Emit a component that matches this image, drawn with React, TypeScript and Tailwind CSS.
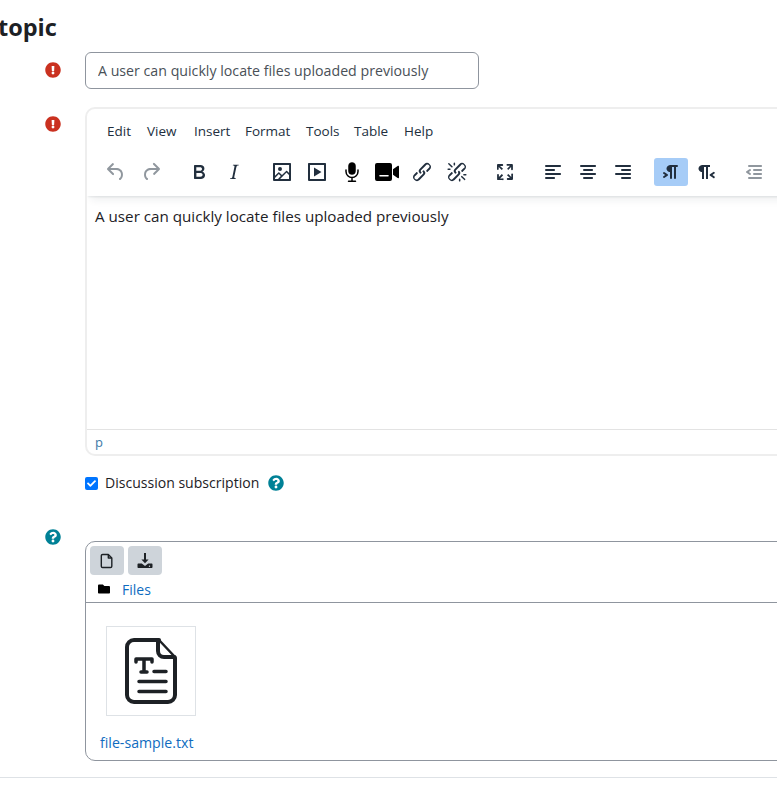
import type { ReactNode } from "react";
import { FaCheck, FaExclamationCircle, FaFolder, FaQuestionCircle } from "react-icons/fa";

// TinyMCE style toolbar glyphs, 24x24 box
const PATHS = {
  undo: "M6.4 8H12c3.7 0 6.2 2 6.8 5.1.6 2.7-.4 5.6-2.3 6.8a1 1 0 0 1-1-1.8c1.1-.6 1.8-2.7 1.4-4.6-.5-2.1-2.1-3.5-4.9-3.5H6.4l3.3 3.3a1 1 0 1 1-1.4 1.4l-5-5a1 1 0 0 1 0-1.4l5-5a1 1 0 0 1 1.4 1.4L6.4 8Z",
  redo: "M17.6 10H12c-2.8 0-4.4 1.4-4.9 3.5-.4 2 .3 4 1.4 4.6a1 1 0 1 1-1 1.8c-2-1.2-2.9-4.1-2.3-6.8.6-3 3-5.1 6.8-5.1h5.6l-3.3-3.3a1 1 0 1 1 1.4-1.4l5 5a1 1 0 0 1 0 1.4l-5 5a1 1 0 0 1-1.4-1.4l3.3-3.3Z",
  bold: "M7.8 19c-.3 0-.5 0-.6-.2l-.2-.5V5.7c0-.2 0-.4.2-.5l.6-.2h5c1.5 0 2.7.3 3.5 1 .7.6 1.1 1.4 1.1 2.5a3 3 0 0 1-.6 1.9c-.4.6-1 1-1.6 1.2.4.1.9.3 1.3.6s.8.7 1 1.2c.4.4.5 1 .5 1.6 0 1.3-.4 2.3-1.3 3-.8.7-2.1 1-3.8 1H7.8Zm5-8.3c.6 0 1.2-.1 1.6-.5.4-.3.6-.7.6-1.3 0-1.1-.8-1.7-2.3-1.7H9.3v3.5h3.4Zm.5 6c.7 0 1.3-.1 1.7-.4.4-.4.6-.9.6-1.5s-.2-1-.7-1.4c-.4-.3-1-.4-2-.4H9.4v3.8h4Z",
  italic: "M16.7 4.7l-.1.9h-.3c-.6 0-1 0-1.4.3-.3.3-.4.6-.5 1.1l-2.1 9.8v.6c0 .5.4.8 1.4.8h.2l-.2.8H8l.2-.8h.2c1.1 0 1.8-.5 2-1.5l2-9.8.1-.5c0-.6-.4-.8-1.4-.8h-.3l.2-.9h5.8Z",
  image: "M5 15.7l3.3-3.2c.3-.3.7-.3 1 0L12 15l4.1-4c.3-.4.8-.4 1 0l2 1.9V5H5v10.7ZM5 18V19h3l2.8-2.9-2-2L5 17.9Zm14-3-2.5-2.4-6.4 6.5H19v-4ZM4 3h16c.6 0 1 .4 1 1v16c0 .6-.4 1-1 1H4a1 1 0 0 1-1-1V4c0-.6.4-1 1-1Zm6 8a2 2 0 1 0 0-4 2 2 0 0 0 0 4Z",
  video: "M4 3h16c.6 0 1 .4 1 1v16c0 .6-.4 1-1 1H4a1 1 0 0 1-1-1V4c0-.6.4-1 1-1Zm1 2v14h14V5H5Zm4 2.5 7.5 4.5L9 16.5v-9Z",
  link: "M6.2 12.3a1 1 0 0 1 1.4 1.4l-2 2a2 2 0 1 0 2.6 2.8l4.8-4.8a1 1 0 0 0 0-1.4 1 1 0 1 1 1.4-1.3 2.9 2.9 0 0 1 0 4L9.6 20a3.9 3.9 0 0 1-5.5-5.5l2-2Zm11.6-.6a1 1 0 0 1-1.4-1.4l2-2a2 2 0 1 0-2.6-2.8L11 10.3a1 1 0 0 0 0 1.4A1 1 0 1 1 9.6 13a2.9 2.9 0 0 1 0-4L14.4 4a3.9 3.9 0 0 1 5.5 5.5l-2 2Z",
  unlink: "M6.2 12.3a1 1 0 0 1 1.4 1.4l-2.1 2a2 2 0 1 0 2.7 2.8l4.8-4.8a1 1 0 0 0 0-1.4 1 1 0 0 1 1.4-1.3 2.9 2.9 0 0 1 0 4L9.6 20a3.9 3.9 0 0 1-5.5-5.5l2-2Zm11.6-.6a1 1 0 0 1-1.4-1.4l2.1-2a2 2 0 1 0-2.7-2.8L11 10.3a1 1 0 0 0 0 1.4A1 1 0 1 1 9.6 13a2.9 2.9 0 0 1 0-4L14.4 4a3.9 3.9 0 0 1 5.5 5.5l-2 2ZM7.6 6.3a.8.8 0 0 1-1 1.1L3.3 4.2a.7.7 0 1 1 1-1l3.2 3.1ZM5.1 8.6a.8.8 0 0 1 0 1.5H3a.8.8 0 0 1 0-1.5H5Zm5-3.5a.8.8 0 0 1-1.5 0V3a.8.8 0 0 1 1.5 0v2Zm6 11.8a.8.8 0 0 1 1-1l3.2 3.2a.8.8 0 0 1-1 1L16 17Zm-2.2 2a.8.8 0 0 1 1.5 0V21a.8.8 0 0 1-1.5 0V19Zm5-3.5a.7.7 0 1 1 0-1.5H21a.8.8 0 0 1 0 1.5H19Z",
  fullscreen: "m15.3 10-1.2-1.3 2.9-3h-2.3a.9.9 0 1 1 0-1.7H19c.5 0 .9.4.9.9v4.4a.9.9 0 1 1-1.8 0V7l-2.9 3Zm0 4 3 3v-2.3a.9.9 0 1 1 1.7 0V19c0 .5-.4.9-.9.9h-4.4a.9.9 0 1 1 0-1.8H17l-3-2.9 1.3-1.2ZM10 15.4l-2.9 3h2.3a.9.9 0 1 1 0 1.7H5a.9.9 0 0 1-.9-.9v-4.4a.9.9 0 1 1 1.8 0V17l2.9-3 1.2 1.3ZM8.7 10 5.7 7v2.3a.9.9 0 0 1-1.7 0V5c0-.5.4-.9.9-.9h4.4a.9.9 0 0 1 0 1.8H7l3 2.9-1.3 1.2Z",
  alignLeft: "M5 5h14c.6 0 1 .4 1 1s-.4 1-1 1H5a1 1 0 1 1 0-2Zm0 4h8c.6 0 1 .4 1 1s-.4 1-1 1H5a1 1 0 1 1 0-2Zm0 8h8c.6 0 1 .4 1 1s-.4 1-1 1H5a1 1 0 0 1 0-2Zm0-4h14c.6 0 1 .4 1 1s-.4 1-1 1H5a1 1 0 0 1 0-2Z",
  alignCenter: "M5 5h14c.6 0 1 .4 1 1s-.4 1-1 1H5a1 1 0 1 1 0-2Zm3 4h8c.6 0 1 .4 1 1s-.4 1-1 1H8a1 1 0 1 1 0-2Zm0 8h8c.6 0 1 .4 1 1s-.4 1-1 1H8a1 1 0 0 1 0-2Zm-3-4h14c.6 0 1 .4 1 1s-.4 1-1 1H5a1 1 0 0 1 0-2Z",
  alignRight: "M5 5h14c.6 0 1 .4 1 1s-.4 1-1 1H5a1 1 0 1 1 0-2Zm6 4h8c.6 0 1 .4 1 1s-.4 1-1 1h-8a1 1 0 0 1 0-2Zm0 8h8c.6 0 1 .4 1 1s-.4 1-1 1h-8a1 1 0 0 1 0-2Zm-6-4h14c.6 0 1 .4 1 1s-.4 1-1 1H5a1 1 0 0 1 0-2Z",
  ltr: "M11 5h7a1 1 0 0 1 0 2h-1v11a1 1 0 0 1-2 0V7h-2v11a1 1 0 0 1-2 0v-6c-.5 0-1 0-1.4-.3A3.4 3.4 0 0 1 7.8 10a3.3 3.3 0 0 1 0-2.8 3.4 3.4 0 0 1 1.8-1.8L11 5ZM4.4 16.2 6.2 15l-1.8-1.2a1 1 0 0 1 1.2-1.6l3 2a1 1 0 0 1 0 1.6l-3 2a1 1 0 1 1-1.2-1.6Z",
  rtl: "M8 5h8v2h-2v12h-2V7h-2v12H8v-7c-.5 0-1 0-1.4-.3A3.4 3.4 0 0 1 4.8 10a3.3 3.3 0 0 1 0-2.8 3.4 3.4 0 0 1 1.8-1.8L8 5Zm12 11.2a1 1 0 1 1-1 1.6l-3-2a1 1 0 0 1 0-1.6l3-2a1 1 0 1 1 1 1.6L18.4 15l1.8 1.2Z",
  outdent: "M7 5h12c.6 0 1 .4 1 1s-.4 1-1 1H7a1 1 0 1 1 0-2Zm5 4h7c.6 0 1 .4 1 1s-.4 1-1 1h-7a1 1 0 0 1 0-2Zm0 4h7c.6 0 1 .4 1 1s-.4 1-1 1h-7a1 1 0 0 1 0-2Zm-5 4h12a1 1 0 0 1 0 2H7a1 1 0 0 1 0-2Zm1.6-3.8a1 1 0 0 1-1.2 1.6l-3-2a1 1 0 0 1 0-1.6l3-2a1 1 0 0 1 1.2 1.6L6.8 12l1.8 1.2Z",
};

const MENU = [
  { label: "Edit", w: "w-[40px]" },
  { label: "View", w: "w-[47px]" },
  { label: "Insert", w: "w-[51px]" },
  { label: "Format", w: "w-[61px]" },
  { label: "Tools", w: "w-[48px]" },
  { label: "Table", w: "w-[50px]" },
  { label: "Help", w: "w-[40px]" },
];

function Btn({ d, dim, active }: { d: string; dim?: boolean; active?: boolean }) {
  return (
    <button type="button" className={`flex h-[28px] w-[35px] shrink-0 items-center justify-center ${dim ? "text-[#222f3e]/50" : "text-[#222f3e]"}`}>
      <span className={`flex h-[28px] w-[34px] items-center justify-center rounded-[3px] ${active ? "bg-[#a6ccf7]" : ""}`}>
        <svg viewBox="0 0 24 24" width="24" height="24" fill="currentColor" fillRule="evenodd">
          <path d={d} />
        </svg>
      </span>
    </button>
  );
}

function IconSlot({ children }: { children: ReactNode }) {
  return <span className="flex h-[28px] w-[35px] shrink-0 items-center justify-center text-black">{children}</span>;
}

export default function App() {
  return (
    <div className="h-[810px] w-[777px] overflow-hidden bg-white font-['Open_Sans',sans-serif] text-[#1d2125]">
      <h3 className="-ml-[2px] h-[52px] pt-[10px] text-[23.5px] font-bold leading-[34px]">topic</h3>

      {/* Subject */}
      <div className="flex">
        <div className="w-[85px] shrink-0 pl-[45px] pt-[10px]">
          <FaExclamationCircle size={16} className="text-[#ca3120]" />
        </div>
        <input
          readOnly
          value="A user can quickly locate files uploaded previously"
          className="h-[37px] w-[394px] rounded-[6px] border border-[#8f959e] px-3 text-[14.2px] text-[#495057] outline-none"
        />
      </div>

      {/* Message editor */}
      <div className="mt-[18px] flex">
        <div className="w-[85px] shrink-0 pl-[45px] pt-[9px]">
          <FaExclamationCircle size={16} className="text-[#ca3120]" />
        </div>
        <div className="h-[349px] w-[740px] shrink-0 overflow-hidden rounded-[10px] border-2 border-[#eeeeee]">
          <div className="relative h-[87px] pl-[11px] shadow-[0_2px_2px_-1px_rgba(34,47,62,0.1),0_8px_8px_-4px_rgba(34,47,62,0.07)]">
            <div className="flex h-[44px] items-center pl-[9px] text-[13.5px] leading-[20px] text-[#222f3e]">
              {MENU.map((m) => (
                <span key={m.label} className={m.w}>{m.label}</span>
              ))}
            </div>
            <div className="flex items-center gap-[13px] pt-[5px]">
              <div className="flex">
                <Btn d={PATHS.undo} dim />
                <Btn d={PATHS.redo} dim />
              </div>
              <div className="flex">
                <Btn d={PATHS.bold} />
                <Btn d={PATHS.italic} />
              </div>
              <div className="flex">
                <Btn d={PATHS.image} />
                <Btn d={PATHS.video} />
                <IconSlot>
                  <svg viewBox="0 0 14 20" width="14" height="20" fill="none" stroke="currentColor">
                    <rect x="3.5" y="0.5" width="7" height="12" rx="3.5" fill="currentColor" strokeWidth="0.5" />
                    <path d="M1 8v1.5a6 6 0 0 0 12 0V8M7 15.5V19M3.5 19.2h7" strokeWidth="1.5" strokeLinecap="round" />
                  </svg>
                </IconSlot>
                <IconSlot>
                  <svg viewBox="0 0 24 18" width="24" height="18" fill="currentColor" fillRule="evenodd">
                    <path d="M2 0h13a2 2 0 0 1 2 2v14a2 2 0 0 1-2 2H2a2 2 0 0 1-2-2V2a2 2 0 0 1 2-2Zm3 12a.7.7 0 0 0 0 1.6h8a.7.7 0 0 0 0-1.6H5Z" />
                    <path d="M18 6.2 22.6 3c.6-.4 1.4 0 1.4.8v10.4c0 .8-.8 1.2-1.4.8L18 11.8V6.2Z" />
                  </svg>
                </IconSlot>
                <Btn d={PATHS.link} />
                <Btn d={PATHS.unlink} />
              </div>
              <Btn d={PATHS.fullscreen} />
              <div className="flex">
                <Btn d={PATHS.alignLeft} />
                <Btn d={PATHS.alignCenter} />
                <Btn d={PATHS.alignRight} />
              </div>
              <div className="flex">
                <Btn d={PATHS.ltr} active />
                <Btn d={PATHS.rtl} />
              </div>
              <Btn d={PATHS.outdent} dim />
            </div>
          </div>
          <div className="h-[233px] pl-[8px] pt-[9px] text-[15.2px] leading-[22px] text-[#1d2125]">
            A user can quickly locate files uploaded previously
          </div>
          <div className="h-[25px] border-t border-[#e3e3e3] pl-[8px] text-[13px] leading-[24px] text-[#3d7aa8]">p</div>
        </div>
      </div>

      {/* Subscription */}
      <div className="mt-[15px] flex h-[24px] items-center pl-[85px] text-[14.05px]">
        <span className="flex h-[13px] w-[13px] items-center justify-center rounded-[2px] bg-[#0075ff] text-white">
          <FaCheck size={9} />
        </span>
        <span className="ml-[7px]">Discussion subscription</span>
        <FaQuestionCircle size={16} className="ml-[9px] text-[#008196]" />
      </div>

      {/* Attachments */}
      <div className="mt-[46px] flex">
        <div className="w-[85px] shrink-0 pl-[45px]">
          <FaQuestionCircle size={16} className="-mt-[12px] text-[#008196]" />
        </div>
        <div className="h-[220px] w-[740px] shrink-0 rounded-[10px] border border-[#8f959e]">
          <div className="h-[61px] border-b border-[#8f959e] pl-[4px] pt-[4px]">
            <div className="flex gap-[4px]">
              <span className="flex h-[29px] w-[34px] items-center justify-center rounded-[4px] bg-[#ced4da]">
                <svg viewBox="0 0 16 18" width="14" height="16" fill="none" stroke="#1d2125" strokeWidth="1.6" strokeLinejoin="round">
                  <path d="M3 1.5h6.5l4 4V15a1.5 1.5 0 0 1-1.5 1.5H3A1.5 1.5 0 0 1 1.5 15V3A1.5 1.5 0 0 1 3 1.5Z" />
                  <path d="M9.5 1.5v4h4" />
                </svg>
              </span>
              <span className="flex h-[29px] w-[34px] items-center justify-center rounded-[4px] bg-[#ced4da]">
                <svg viewBox="0 0 16 16" width="16" height="16" fill="#1d2125">
                  <path d="M7 0h2v6.5h2.6L8 10.2 4.4 6.5H7V0Z" />
                  <path d="M1.5 10.5h3.3L8 13l3.2-2.5h3.3c.6 0 1 .4 1 1V14c0 .6-.4 1-1 1h-13c-.6 0-1-.4-1-1v-2.5c0-.6.4-1 1-1Zm11 2a.7.7 0 1 0 0 1.4.7.7 0 0 0 0-1.4Z" fillRule="evenodd" />
                </svg>
              </span>
            </div>
            <div className="flex h-[27px] items-center pl-[8px] pt-[2px] text-[14px]">
              <FaFolder size={12} className="-mt-[1px] text-black" />
              <span className="ml-[12px] text-[#0f6cbf]">Files</span>
            </div>
          </div>
          <div className="pl-[14px] pt-[23px]">
            <div className="ml-[6px] flex h-[90px] w-[90px] items-center justify-center border border-[#dee2e6]">
              <svg viewBox="0 0 52 66" width="52" height="66" fill="none" stroke="#1d2125" strokeLinecap="round" strokeLinejoin="round">
                <path strokeWidth="4" d="M34 2H9a7 7 0 0 0-7 7v48a7 7 0 0 0 7 7h34a7 7 0 0 0 7-7V20" />
                <path strokeWidth="2.5" d="M34 2 50 19" />
                <path strokeWidth="4" d="M33 2.5V13a6 6 0 0 0 6 6h10.5" />
                <path strokeWidth="3.5" d="M11 24v-3h16v3M19 21v13M16 34h6" />
                <path strokeWidth="3.5" d="M29 33.5h12M14 43.5h27M14 53.5h27" />
              </svg>
            </div>
            <div className="mt-[16px] text-[14.15px] leading-[22px] text-[#0f6cbf]">file-sample.txt</div>
          </div>
        </div>
      </div>

      <div className="mt-[16px] border-t border-[#dee2e6]" />
    </div>
  );
}
